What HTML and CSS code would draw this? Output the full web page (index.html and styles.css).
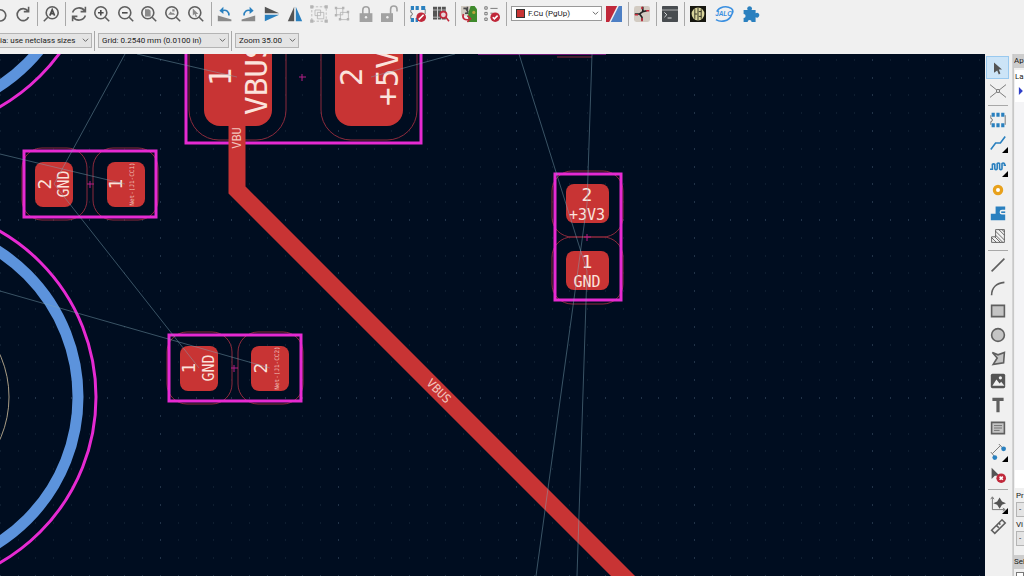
FILE: index.html
```html
<!DOCTYPE html>
<html lang="en">
<head>
    <meta charset="UTF-8">
    <meta name="viewport" content="width=device-width, initial-scale=1.0">
    <title>PCB Editor</title>
    <link rel="stylesheet" href="styles.css">
</head>
<body>
    <header class="toolbars">
        <div class="toolbar main-toolbar">
            <div class="group">
                <button class="tool" aria-label="Undo"><svg viewBox="0 0 20 20"><path class="line" d="M5 2v5h5M5 7a7 7 0 1 1-1 8"/></svg></button>
                <button class="tool" aria-label="Redo"><svg viewBox="0 0 20 20"><path class="line" d="M17 1v6h-6M16 6A7.500 7.500 0 1 0 17 14"/></svg></button>
            </div>
            <span class="sep"></span>
            <div class="group">
                <button class="tool" aria-label="Find"><svg viewBox="0 0 20 20"><circle class="line" cx="11.500" cy="8.500" r="7.500"/><path class="line" d="M6 14l-5 5"/><path class="line bold" d="M8.500 12l3-7.500 3 7.500M9.500 9.500h4"/></svg></button>
            </div>
            <span class="sep"></span>
            <div class="group group-6">
                <button class="tool" aria-label="Refresh"><svg viewBox="0 0 20 20"><path class="line" d="M2 8a8.500 8.500 0 0 1 15-2M18 1v6h-6M18 12a8.500 8.500 0 0 1-15 2M2 19v-6h6"/></svg></button>
                <button class="tool" aria-label="Zoom in"><svg viewBox="0 0 20 20"><circle class="line" cx="8.500" cy="8.500" r="7.500"/><path class="line" d="M14 14l5 5"/><path class="line bold" d="M5 8.500h7M8.500 5v7"/></svg></button>
                <button class="tool" aria-label="Zoom out"><svg viewBox="0 0 20 20"><circle class="line" cx="8.500" cy="8.500" r="7.500"/><path class="line" d="M14 14l5 5"/><path class="line bold" d="M5 8.500h7"/></svg></button>
                <button class="tool" aria-label="Zoom to fit page"><svg viewBox="0 0 20 20"><circle class="line" cx="8.500" cy="8.500" r="7.500"/><path class="line" d="M14 14l5 5"/><path class="mid" d="M5 4h5l2 2v7H5z"/></svg></button>
                <button class="tool" aria-label="Zoom to objects"><svg viewBox="0 0 20 20"><circle class="line" cx="8.500" cy="8.500" r="7.500"/><path class="line" d="M14 14l5 5"/><path class="mid" d="M4 11l3-4 2 2 1-1 3 3zM9 4h3v3H9z"/></svg></button>
                <button class="tool" aria-label="Zoom to selection"><svg viewBox="0 0 20 20"><circle class="line" cx="8.500" cy="8.500" r="7.500"/><path class="line" d="M14 14l5 5"/><path class="mid" d="M6 3v9l2-2 2 4 1-1-1-3h3z"/></svg></button>
            </div>
            <span class="sep"></span>
            <div class="group group-8">
                <button class="tool" aria-label="Rotate counterclockwise"><svg viewBox="0 0 20 20"><path class="mid" d="M1 12l17 5v2H1z"/><path class="blue-line" d="M6 6c6-2 9 1 9 6"/><path class="blue" d="M8 1v9L3 6z"/></svg></button>
                <button class="tool" aria-label="Rotate clockwise"><svg viewBox="0 0 20 20"><path class="mid" d="M19 12L2 17v2h17z"/><path class="blue-line" d="M14 6c-6-2-9 1-9 6"/><path class="blue" d="M12 1v9l5-4z"/></svg></button>
                <button class="tool" aria-label="Flip vertically"><svg viewBox="0 0 20 20"><path class="dark" d="M1 1l18 8H1z"/><path class="blue" d="M1 11h18L1 19z"/></svg></button>
                <button class="tool" aria-label="Flip horizontally"><svg viewBox="0 0 20 20"><path class="dark" d="M9 1v18H1z"/><path class="blue" d="M11 1l8 18h-8z"/></svg></button>
                <button class="tool" aria-label="Group" disabled><svg viewBox="0 0 20 20"><path class="pale-line dashed" d="M1 1h18v18H1z"/><path class="pale-line" d="M5 5h7v7H5zM8 8h8v8H8z"/><path class="pale" d="M-1-1h4v4h-4zM17-1h4v4h-4zM-1 17h4v4h-4zM17 17h4v4h-4z"/></svg></button>
                <button class="tool" aria-label="Ungroup" disabled><svg viewBox="0 0 20 20"><path class="pale-line" d="M3 3h8v8H3zM8 8h10v9H8z"/><path class="pale" d="M1 1h3v3H1zM10 1h3v3h-3zM1 10h3v3H1zM16 6h3v3h-3zM6 15h3v3H6zM16 15h3v3h-3z"/></svg></button>
                <button class="tool" aria-label="Lock" disabled><svg viewBox="0 0 20 20"><path class="lock-line" d="M6 10V5a4 4 0 0 1 8 0v5"/><path class="grey" d="M2 9h16v11H2z"/><circle class="light" cx="10" cy="14" r="1.500"/></svg></button>
                <button class="tool" aria-label="Unlock" disabled><svg viewBox="0 0 20 20"><path class="lock-line" d="M12 10V4a4 4 0 0 1 8 0v3"/><path class="grey" d="M0 9h15v11H0z"/><circle class="light" cx="8" cy="14" r="1.500"/></svg></button>
            </div>
            <span class="sep"></span>
            <div class="group">
                <button class="tool" aria-label="Footprint editor"><svg viewBox="0 0 20 20"><path class="line thin" d="M1 5v3a2 2 0 0 1 0 4v4M19 4v6"/><path class="blue" d="M1 0h4v5H1zM7 0h4v5H7zM14 0h5v5h-5zM1 15h4v5H1zM7 15h3v5H7z"/><circle class="red" cx="14" cy="14" r="6"/><path class="white-line" d="M11 17l6-6"/></svg></button>
                <button class="tool" aria-label="Footprint browser"><svg viewBox="0 0 20 20"><path class="dark" d="M0 1h5v16H0zM6 1h4v16H6zM11 1h5v16h-5z"/><path class="stripe" d="M0 5h16M0 14h9"/><circle class="lens" cx="13" cy="11" r="4"/><path class="red-line" d="M16 14l4 5"/></svg></button>
            </div>
            <span class="sep"></span>
            <div class="group">
                <button class="tool" aria-label="Update board from schematic"><svg viewBox="0 0 20 20"><path class="tan" d="M0 0h12v12H0z"/><path class="green" d="M12 0h5l3 4v16H9V9z"/><path class="line bold" d="M3 3h3l3 5M5 9h4M8 1v8"/><path class="red-line" d="M3 10c-2 5 1 8 7 7M8 12l4 4-4 4"/><circle class="olive" cx="16" cy="8" r="2"/></svg></button>
                <button class="tool" aria-label="Design rules checker"><svg viewBox="0 0 20 20"><path class="line thin" d="M1 1h3v3H1zM1 8h3v3H1zM1 15h3v3H1zM8 3h9M8 9h3"/><circle class="red" cx="14" cy="14" r="6"/><path class="white-line" d="M11 14l2 2 4-4"/></svg></button>
            </div>
            <span class="sep"></span>
            <div class="combo layer-combo">
                <span class="swatch"></span>
                <select aria-label="Active layer"><option>F.Cu (PgUp)</option></select>
                <svg class="chevron" viewBox="0 0 8 8"><path d="M1 2l3 3 3-3"/></svg>
            </div>
            <button class="tool" aria-label="Layer pair"><svg viewBox="0 0 20 20"><path class="red" d="M0 0h14L4 20H0z"/><path class="layer-blue" d="M16 0h4v20H6z"/></svg></button>
            <span class="sep"></span>
            <button class="tool" aria-label="Router settings"><svg viewBox="0 0 20 20"><rect class="tan" width="20" height="20" rx="3"/><path class="black-line" d="M1 10h6l4-3V1M11 7l5-1M7 10l3 4v4"/><path class="red-line" d="M15 6h4M10 15v4M1 11h4M10 1v3"/></svg></button>
            <span class="sep"></span>
            <button class="tool" aria-label="Scripting console"><svg viewBox="0 0 20 20"><rect class="console" width="20" height="20" rx="1"/><path class="stripe" d="M0 5h20"/><path class="white-line thin" d="M3 8l3 3-3 3M7 15h5"/></svg></button>
            <span class="sep"></span>
            <div class="plugins">
                <button class="tool" aria-label="Interactive BOM"><svg viewBox="0 0 20 20"><path class="black" d="M0 0h20v20H0z"/><circle class="bom" cx="10" cy="10" r="8"/><path class="bom-line" d="M6 4v12M10 2v16M14 4v12M6 10h3M11 7h3M11 13h3"/></svg></button>
                <button class="tool" aria-label="JLC tools"><svg class="wide" viewBox="0 0 24 20"><path class="sky-line" d="M3 7C6 1 15-1 21 3M21 12C18 19 8 21 2 17M21 3c3 2 2 6 0 9"/><text class="jlc" x="1" y="13">JALC</text></svg></button>
                <button class="tool" aria-label="Plugins"><svg viewBox="0 0 20 20"><path class="blue" d="M2 5h5a3 3 0 1 1 5 0h5v4a3 3 0 1 1 0 5v6h-5a2.500 2.500 0 1 0-5 0H2v-5a2.500 2.500 0 1 0 0-5z"/></svg></button>
            </div>
        </div>
        <div class="toolbar option-toolbar">
            <div class="combo via-combo">
                <select aria-label="Via size"><option>ia: use netclass sizes</option></select>
                <svg class="chevron" viewBox="0 0 8 8"><path d="M1 2l3 3 3-3"/></svg>
            </div>
            <span class="sep"></span>
            <div class="combo grid-combo">
                <select aria-label="Grid"><option>Grid: 0.2540 mm (0.0100 in)</option></select>
                <svg class="chevron" viewBox="0 0 8 8"><path d="M1 2l3 3 3-3"/></svg>
            </div>
            <span class="sep"></span>
            <div class="combo zoom-combo">
                <select aria-label="Zoom"><option>Zoom 35.00</option></select>
                <svg class="chevron" viewBox="0 0 8 8"><path d="M1 2l3 3 3-3"/></svg>
            </div>
        </div>
    </header>

    <main class="workspace">
        <svg class="board" role="img" aria-label="Board">
            <defs>
                <pattern id="grid-minor" width="89" height="89" patternUnits="userSpaceOnUse" x="71" y="41">
                    <path class="dot" d="M0 0h1M18 0h1M36 0h1M53 0h1M71 0h1M0 18h1M18 18h1M36 18h1M53 18h1M71 18h1M0 36h1M18 36h1M36 36h1M53 36h1M71 36h1M0 53h1M18 53h1M36 53h1M53 53h1M71 53h1M0 71h1M18 71h1M36 71h1M53 71h1M71 71h1" transform="translate(0 1)"/>
                </pattern>
                <pattern id="grid-major" width="178" height="178" patternUnits="userSpaceOnUse" x="160" y="41">
                    <path class="dot major" d="M0 1h1M0 19h1M0 37h1M0 54h1M0 72h1M0 90h1M0 108h1M0 126h1M0 143h1M0 161h1M18 1h1M36 1h1M53 1h1M71 1h1M89 1h1M107 1h1M125 1h1M142 1h1M160 1h1"/>
                </pattern>
            </defs>
            <g transform="translate(0 -54)">
                <rect width="100%" height="200%" fill="url(#grid-minor)"/>
                <rect width="100%" height="200%" fill="url(#grid-major)"/>

                <!-- mounting holes -->
                <circle class="silk" cx="-95" cy="-59" r="173"/>
                <circle class="courtyard" cx="-95" cy="-59" r="191"/>
                <circle class="silk" cx="-95" cy="397" r="173"/>
                <circle class="courtyard" cx="-95" cy="397" r="191"/>
                <circle class="drill" cx="-95" cy="397" r="104"/>

                <!-- power input -->
                <rect class="clearance" x="189" y="0" width="97" height="140" rx="30"/>
                <rect class="clearance" x="321" y="0" width="96" height="140" rx="30"/>
                <rect class="pad" x="204" y="20" width="68" height="106" rx="16"/>
                <rect class="pad" x="335" y="20" width="68" height="106" rx="16"/>
                <path class="courtyard" d="M186 40v103h235V40"/>
                <path class="cross" d="M299 77h7M302 74v7"/>
                <text class="big" transform="translate(231 77) rotate(-90)" text-anchor="middle">1</text>
                <text class="big" transform="translate(267 115) rotate(-90)">VBUS</text>
                <text class="big" transform="translate(362 77) rotate(-90)" text-anchor="middle">2</text>
                <text class="big" transform="translate(398 106) rotate(-90)">+5V</text>

                <path class="courtyard" d="M478 53h128"/>
                <path class="clearance" d="M557 57h35"/>

                <!-- track -->
                <path class="track" d="M237 120v70l440 440"/>
                <text class="net" transform="translate(241 138) rotate(-90)" text-anchor="middle">VBU</text>
                <text class="net" transform="translate(436 394) rotate(45)" text-anchor="middle">VBUS</text>

                <!-- CC1 resistor -->
                <rect class="clearance" x="22" y="148" width="65" height="72" rx="20"/>
                <rect class="clearance" x="93" y="148" width="65" height="72" rx="20"/>
                <rect class="pad" x="35" y="162" width="38" height="45" rx="8"/>
                <rect class="pad" x="107" y="162" width="38" height="45" rx="8"/>
                <rect class="courtyard" x="24" y="151" width="132" height="66"/>
                <path class="cross" d="M87 184h7M90 181v7"/>
                <text class="num" transform="translate(51 184) rotate(-90)" text-anchor="middle">2</text>
                <text class="name" transform="translate(69 184) rotate(-90)" text-anchor="middle">GND</text>
                <text class="num" transform="translate(122 184) rotate(-90)" text-anchor="middle">1</text>
                <text class="tiny" transform="translate(134 184) rotate(-90)" text-anchor="middle">Net-(J1-CC1)</text>

                <!-- CC2 resistor -->
                <rect class="clearance" x="167" y="332" width="65" height="72" rx="20"/>
                <rect class="clearance" x="238" y="332" width="65" height="72" rx="20"/>
                <rect class="pad" x="180" y="346" width="38" height="45" rx="8"/>
                <rect class="pad" x="251" y="346" width="38" height="45" rx="8"/>
                <rect class="courtyard" x="169" y="335" width="132" height="66"/>
                <path class="cross" d="M231 368h7M234 365v7"/>
                <text class="num" transform="translate(195 368) rotate(-90)" text-anchor="middle">1</text>
                <text class="name" transform="translate(214 368) rotate(-90)" text-anchor="middle">GND</text>
                <text class="num" transform="translate(267 368) rotate(-90)" text-anchor="middle">2</text>
                <text class="tiny" transform="translate(279 368) rotate(-90)" text-anchor="middle">Net-(J1-CC2)</text>

                <!-- decoupling capacitor -->
                <rect class="clearance" x="552" y="171" width="71" height="66" rx="20"/>
                <rect class="clearance" x="552" y="237" width="71" height="67" rx="20"/>
                <rect class="pad" x="566" y="184" width="43" height="39" rx="8"/>
                <rect class="pad" x="566" y="251" width="43" height="39" rx="8"/>
                <rect class="courtyard" x="555" y="174" width="66" height="126"/>
                <path class="cross" d="M584 237h7M587 234v7"/>
                <text class="num" x="587" y="201" text-anchor="middle">2</text>
                <text class="name" x="587" y="220" text-anchor="middle">+3V3</text>
                <text class="num" x="587" y="268" text-anchor="middle">1</text>
                <text class="name" x="587" y="287" text-anchor="middle">GND</text>

                <!-- ratsnest -->
                <path class="rats" d="M0 154L125 184M125 54L54 184L199 368M0 291L270 368M137 54L237 77M371 77L455 54M519 54L587 271L577 576M592 54L587 204L536 576"/>
            </g>
        </svg>

        <aside class="side-tools">
            <div class="stack">
                <button class="tool selected" aria-label="Select"><svg viewBox="0 0 20 20"><path class="dark" d="M5 3v13l4-3 2 5 2-1-2-5h4z"/></svg></button>
                <button class="tool" aria-label="Local ratsnest"><svg viewBox="0 0 20 20"><path class="line thin" d="M0 2l20 16M20 2L0 18"/><circle class="node" cx="10" cy="10" r="2"/></svg></button>
            </div>
            <span class="sep"></span>
            <div class="stack stack-6">
                <button class="tool" aria-label="Place footprint"><svg viewBox="0 0 20 20"><path class="line thin" d="M1 4v4a2 2 0 0 1 0 4v4M19 4v12"/><path class="blue" d="M2 1h4v5H2zM8 1h4v5H8zM14 1h4v5h-4zM2 14h4v5H2zM8 14h4v5H8zM14 14h4v5h-4z"/></svg></button>
                <button class="tool more" aria-label="Route track"><svg viewBox="0 0 20 20"><path class="blue-line" d="M1 18l6-8h6l6-8"/></svg></button>
                <button class="tool more" aria-label="Tune length"><svg viewBox="0 0 20 20"><path class="blue-line" d="M0 14h3V8a2 2 0 0 1 3 0v5a1 1 0 0 0 3 0V7a2 2 0 0 1 3 0v6a1 1 0 0 0 3 0V7a2 2 0 0 1 3 0v2h2"/></svg></button>
                <button class="tool" aria-label="Add via"><svg viewBox="0 0 20 20"><circle class="via" cx="10" cy="10" r="4.500"/></svg></button>
                <button class="tool" aria-label="Add zone"><svg viewBox="0 0 20 20"><path class="blue" d="M7 2h12v4h-4a3 3 0 0 0 0 6h4v7H1v-8h6z"/><path class="blue-line" d="M14 9h5"/></svg></button>
                <button class="tool" aria-label="Add rule area"><svg viewBox="0 0 20 20"><path class="hatch" d="M7 2h11v16H2v-7h5zM7 4l11 11M7 9l9 9M11 2l7 7M2 12l6 6M15 2l3 3M6 11l7 7"/></svg></button>
            </div>
            <span class="sep"></span>
            <div class="stack stack-10">
                <button class="tool" aria-label="Line"><svg viewBox="0 0 20 20"><path class="line" d="M2 18L18 2"/></svg></button>
                <button class="tool" aria-label="Arc"><svg viewBox="0 0 20 20"><path class="line" d="M2 19C2 10 8 4 18 3"/></svg></button>
                <button class="tool" aria-label="Rectangle"><svg viewBox="0 0 20 20"><path class="shape" d="M2 3h16v14H2z"/></svg></button>
                <button class="tool" aria-label="Circle"><svg viewBox="0 0 20 20"><circle class="shape" cx="10" cy="10" r="8"/></svg></button>
                <button class="tool" aria-label="Polygon"><svg viewBox="0 0 20 20"><path class="shape" d="M3 3l7 3 8-3-1 13-13 2 5-8z"/></svg></button>
                <button class="tool" aria-label="Image"><svg viewBox="0 0 20 20"><rect class="dark" x="1" y="1" width="18" height="18" rx="2"/><path class="light" d="M3 16l5-8 4 5 2-2 4 5z"/><circle class="light" cx="13" cy="6" r="2"/></svg></button>
                <button class="tool" aria-label="Text"><svg viewBox="0 0 20 20"><path class="line heavy" d="M3 3h14M10 4v15"/></svg></button>
                <button class="tool" aria-label="Text box"><svg viewBox="0 0 20 20"><path class="shape" d="M2 3h16v14H2z"/><path class="line thin" d="M5 7h10M5 10h10M5 13h7"/></svg></button>
                <button class="tool more" aria-label="Dimension"><svg viewBox="0 0 20 20"><path class="line thin" d="M3 12L13 2M1 10l5 6M11 0l6 6"/><circle class="blue" cx="6" cy="17" r="3"/><circle class="blue" cx="17" cy="6" r="3"/></svg></button>
                <button class="tool" aria-label="Delete"><svg viewBox="0 0 20 20"><path class="dark" d="M2 1v14l4-4h6z"/><circle class="red" cx="14" cy="14" r="6"/><path class="white-line" d="M12 12l4 4M16 12l-4 4"/></svg></button>
            </div>
            <span class="sep"></span>
            <div class="stack">
                <button class="tool more" aria-label="Grid origin"><svg viewBox="0 0 20 20"><path class="line thin" d="M3 2v15h15M1 4l2-3 2 3M16 15l3 2-3 2"/><path class="dark" d="M9 7l3-5 3 5 5 2-5 2-3 5-3-5-5-2z"/></svg></button>
                <button class="tool" aria-label="Measure"><svg viewBox="0 0 20 20"><path class="line" d="M2 14L15 1l4 4L6 18zM8 8l3 3M11 5l2 2"/></svg></button>
            </div>
        </aside>

        <aside class="panel">
            <h2>Ap</h2>
            <div class="layers">
                <span class="tab">La</span>
                <svg class="marker" viewBox="0 0 6 10"><path d="M1 0l5 5-5 5z"/></svg>
            </div>
            <div class="presets">
                <label for="preset">Pr</label>
                <select id="preset"><option>-</option></select>
                <label for="viewport">Vi</label>
                <select id="viewport"><option>-</option></select>
            </div>
            <h2>Sel</h2>
            <div class="filter"></div>
        </aside>
    </main>
</body>
</html>
```

FILE: styles.css
```css
* {
    box-sizing: border-box;
}
body {
    margin: 0;
    height: 100vh;
    display: flex;
    flex-direction: column;
    overflow: hidden;
    background: #f0f0f0;
    color: #1a1a1a;
    font-family: Roboto, "Open Sans", sans-serif;
    font-size: 8px;
}

/* toolbars */
.toolbars {
    flex: none;
    overflow: hidden;
}
.toolbar {
    display: flex;
    align-items: center;
    height: 27px;
}
.main-toolbar {
    margin-left: -12px;
}
.group {
    display: grid;
    grid-auto-flow: column;
    grid-auto-columns: 1fr;
    justify-items: center;
}
.group-6 {
    width: 141px;
}
.group-8 {
    width: 188px;
}
.plugins {
    display: flex;
    gap: 3px;
}
.tool {
    position: relative;
    display: flex;
    align-items: center;
    justify-content: center;
    width: 23px;
    height: 23px;
    padding: 0;
    border: 1px solid transparent;
    background: none;
}
.tool svg {
    width: 16px;
    height: 16px;
    overflow: visible;
}
.tool svg.wide {
    width: 20px;
}
.sep {
    flex: none;
    width: 1px;
    height: 24px;
    margin: 0 1px 0 3px;
    background: #a8a8a8;
}

/* drop-downs */
.combo {
    position: relative;
    display: flex;
    align-items: center;
    height: 15px;
    border: 1px solid #b4b4b4;
    background: #e4e4e4;
}
.combo select {
    appearance: none;
    width: 100%;
    height: 13px;
    padding: 0 12px 0 3px;
    border: 0;
    background: none;
    color: inherit;
    font: inherit;
    line-height: 13px;
}
.chevron {
    position: absolute;
    right: 2px;
    width: 7px;
    height: 7px;
    fill: none;
    stroke: #555;
}
.layer-combo {
    width: 91px;
    margin-left: 3px;
    padding-left: 4px;
    background: #fff;
    border-color: #999;
}
.swatch {
    flex: none;
    width: 9px;
    height: 9px;
    border: 1px solid #333;
    background: #c83434;
}
.option-toolbar .sep {
    height: 20px;
    margin: 0 3px 0 2px;
}
.via-combo {
    width: 93px;
    margin-left: -1px;
}
.via-combo select {
    padding-left: 0;
}
.grid-combo {
    width: 131px;
}
.zoom-combo {
    width: 64px;
}

/* icon paint */
.line {
    fill: none;
    stroke: #5f5f5f;
    stroke-width: 2;
}
.line.thin {
    stroke-width: 1;
}
.line.bold {
    stroke: #4a4a4a;
}
.line.heavy {
    stroke-width: 4;
}
.hatch {
    fill: none;
    stroke: #4a4a4a;
    stroke-width: 1;
}
.dark {
    fill: #545454;
}
.mid {
    fill: #8a8a8a;
}
.grey {
    fill: #a2a2a2;
}
.pale {
    fill: #b4b4b4;
}
.light {
    fill: #f0f0f0;
}
.black {
    fill: #16160f;
}
.blue {
    fill: #2a80bf;
}
.red {
    fill: #c0283a;
}
.green {
    fill: #3f8a2c;
}
.olive {
    fill: #b9a33a;
}
.tan {
    fill: #d2cbc2;
}
.layer-blue {
    fill: #4d7fc4;
}
.console {
    fill: #484c50;
}
.blue-line,
.red-line,
.white-line,
.black-line,
.pale-line,
.lock-line,
.stripe,
.sky-line {
    fill: none;
    stroke-width: 2;
}
.blue-line {
    stroke: #2a80bf;
}
.red-line {
    stroke: #c0283a;
}
.white-line {
    stroke: #fff;
}
.white-line.thin {
    stroke-width: 1;
}
.black-line {
    stroke: #222;
}
.pale-line {
    stroke: #b4b4b4;
    stroke-width: 1;
}
.pale-line.dashed {
    stroke-dasharray: 3 2;
}
.lock-line {
    stroke: #a2a2a2;
}
.stripe {
    stroke: #c8c8c8;
    stroke-width: 1;
}
.sky-line {
    stroke: #3a8fe0;
}
.lens {
    fill: #e6d3d8;
    stroke: #c0283a;
    stroke-width: 2;
}
.bom {
    fill: #d8d49c;
}
.bom-line {
    fill: none;
    stroke: #16160f;
}
.jlc {
    fill: #3a8fe0;
    font-size: 8px;
    font-style: italic;
    font-weight: bold;
}
.shape {
    fill: #c4c4c4;
    stroke: #5f5f5f;
    stroke-width: 2;
}
.node {
    fill: #f0f0f0;
    stroke: #5f5f5f;
}
.via {
    fill: #fff;
    stroke: #e8a11c;
    stroke-width: 4;
}

/* board */
.workspace {
    flex: 1;
    min-height: 0;
    display: grid;
    grid-template-columns: 1fr 28px 11px;
}
.board {
    width: 100%;
    height: 100%;
    background: #000d20;
    font-family: "DejaVu Sans Mono", monospace;
    fill: #fbe3dc;
}
.dot {
    stroke: #1c2d40;
}
.dot.major {
    stroke: #344860;
}
.silk {
    fill: none;
    stroke: #5c93dc;
    stroke-width: 11;
}
.courtyard {
    fill: none;
    stroke: #e62ad2;
    stroke-width: 3;
}
.drill {
    fill: none;
    stroke: #a89c84;
}
.track {
    fill: none;
    stroke: #c83434;
    stroke-width: 17;
}
.pad {
    fill: #c83434;
}
.clearance {
    fill: none;
    stroke: #8c2a3c;
}
.cross {
    fill: none;
    stroke: #b41f86;
}
.rats {
    fill: none;
    stroke: #7fa9b8;
    stroke-opacity: 0.45;
}
.big {
    font-size: 31px;
}
.num {
    font-size: 18px;
}
.name {
    font-size: 15px;
}
.net {
    font-size: 12px;
    fill: #f2c4bc;
}
.tiny {
    font-size: 6px;
    fill: #f2c4bc;
}

/* right tools */
.side-tools {
    padding: 2px 0 0 1px;
    border-right: 1px solid #d4d4d4;
}
.stack {
    display: grid;
    grid-auto-rows: 1fr;
    height: 47px;
}
.stack-6 {
    height: 140px;
}
.stack-10 {
    height: 234px;
}
.side-tools .sep {
    display: block;
    width: 20px;
    height: 1px;
    margin: 2px;
}
.tool.selected {
    border-color: #99c9ef;
    background: #cce4f7;
}
.tool.more::after {
    content: "";
    position: absolute;
    right: 0;
    bottom: 0;
    border: 3px solid #000;
    border-top-color: transparent;
    border-left-color: transparent;
}

/* panel */
.panel {
    display: flex;
    flex-direction: column;
    overflow: hidden;
    border-left: 1px solid #c8c8c8;
    white-space: nowrap;
}
.panel > * {
    flex: none;
}
.panel h2 {
    margin: 0;
    height: 14px;
    background: #cdcdcd;
    font-size: 8px;
    font-weight: normal;
    line-height: 14px;
}
.layers {
    height: 418px;
    margin: 2px 0 0 1px;
    background: linear-gradient(#fff 32px, #f4f4f6 32px, #f4f4f6 400px, #fff 400px);
}
.tab {
    display: block;
    line-height: 14px;
}
.marker {
    display: block;
    width: 5px;
    height: 8px;
    margin: 3px;
    fill: #2f3fc8;
}
.presets {
    display: flex;
    flex-direction: column;
    height: 67px;
    padding: 1px 0 0 2px;
}
.presets label {
    line-height: 13px;
}
.presets select {
    appearance: none;
    width: 40px;
    height: 15px;
    margin-bottom: 1px;
    padding: 0 2px;
    border: 1px solid #b4b4b4;
    border-radius: 0;
    background: #e4e4e4;
    color: inherit;
    font: inherit;
}
.filter {
    height: 16px;
    margin: 3px 0 0 2px;
    border: 1px solid #777;
    background: #fff;
}
```
